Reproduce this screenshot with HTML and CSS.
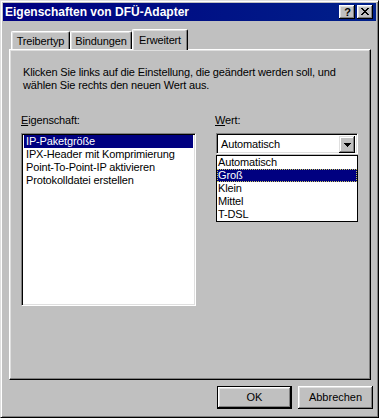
FILE: index.html
```html
<!DOCTYPE html>
<html>

<head>
    <title>Eigenschaften von DFÜ-Adapter</title>
    <link rel="stylesheet" href="styles.css">
</head>

<body>
    <div class="window">
        <div class="titlebar">
            <span class="title">Eigenschaften von DFÜ-Adapter</span>
            <div class="caption-buttons">
                <span class="cap-btn help">?</span>
                <span class="cap-btn close">
                    <svg width="8" height="7" viewBox="0 0 8 7">
                        <path d="M0 0h2v1h1v1h2v-1h1v-1h2v1h-1v1h-1v1h-1v1h1v1h1v1h1v1h-2v-1h-1v-1h-2v1h-1v1h-2v-1h1v-1h1v-1h1v-1h-1v-1h-1v-1h-1z" fill="#000" />
                    </svg>
                </span>
            </div>
        </div>

        <div class="tabs">
            <span class="tab tab-1">Treibertyp</span>
            <span class="tab tab-2">Bindungen</span>
            <span class="tab tab-3 active">Erweitert</span>
        </div>

        <div class="panel">
            <p class="intro">Klicken Sie links auf die Einstellung, die geändert werden soll, und
                wählen Sie rechts den neuen Wert aus.</p>
            <div class="fields">
                <div class="field field-left">
                    <label class="caption"><u>E</u>igenschaft:</label>
                    <ul class="listbox">
                        <li class="selected">IP-Paketgröße</li>
                        <li>IPX-Header mit Komprimierung</li>
                        <li>Point-To-Point-IP aktivieren</li>
                        <li>Protokolldatei erstellen</li>
                    </ul>
                </div>
                <div class="field field-right">
                    <label class="caption"><u>W</u>ert:</label>
                    <div class="combo">
                        <span class="combo-value">Automatisch</span>
                        <span class="combo-arrow">
                            <svg width="7" height="4" viewBox="0 0 7 4">
                                <path d="M0 0h7v1h-1v1h-1v1h-1v1h-1v-1h-1v-1h-1v-1h-1z" fill="#000" />
                            </svg>
                        </span>
                    </div>
                    <ul class="dropdown">
                        <li>Automatisch</li>
                        <li class="selected focus">Groß</li>
                        <li>Klein</li>
                        <li>Mittel</li>
                        <li>T-DSL</li>
                    </ul>
                </div>
            </div>
        </div>

        <div class="actions">
            <button type="button" class="btn default">OK</button>
            <button type="button" class="btn">Abbrechen</button>
        </div>
    </div>
</body>

</html>
```

FILE: styles.css
```css
body {
    margin: 0;
    background: #c0c0c0;
    font-family: "Liberation Sans", Arial, sans-serif;
    font-size: 11px;
    line-height: 13px;
    letter-spacing: -0.15px;
    color: #000;
}

.window {
    box-sizing: border-box;
    width: 379px;
    height: 418px;
    padding: 2px;
    background: #c0c0c0;
    border: 1px solid;
    border-color: #dfdfdf #000 #000 #dfdfdf;
    box-shadow: inset 1px 1px #fff, inset -1px -1px #808080;
}

/* title bar */
.titlebar {
    display: flex;
    align-items: center;
    justify-content: space-between;
    height: 18px;
    padding: 0 3px 0 2px;
    background: linear-gradient(to right, #000080, #00208a);
}

.title {
    color: #fff;
    font-weight: bold;
    font-size: 12px;
    letter-spacing: 0;
}

.caption-buttons {
    display: flex;
    gap: 2px;
}

.cap-btn {
    box-sizing: border-box;
    display: flex;
    align-items: center;
    justify-content: center;
    width: 16px;
    height: 14px;
    background: #c0c0c0;
    box-shadow: inset -1px -1px #000, inset 1px 1px #fff, inset -2px -2px #808080, inset 2px 2px #dfdfdf;
}

.help {
    font-weight: bold;
    font-size: 11px;
    line-height: 14px;
    padding-left: 1px;
}

.close svg {
    margin-top: -1px;
}

/* tabs */
.tabs {
    display: flex;
    align-items: flex-end;
    height: 20px;
    margin: 8px 0 0 8px;
    position: relative;
    z-index: 1;
}

.tab {
    box-sizing: border-box;
    height: 18px;
    padding-top: 3px;
    text-align: center;
    background: #c0c0c0;
    border-top: 1px solid #fff;
    border-left: 1px solid #fff;
    border-right: 1px solid #000;
    border-radius: 2px 2px 0 0;
    box-shadow: inset -1px 0 #808080, inset 1px 1px #dfdfdf;
}

.tab-1 {
    width: 59px;
}

.tab-2 {
    width: 62px;
}

.tab-3 {
    width: 51px;
}

.tab.active {
    height: 21px;
    margin: 0 -2px -1px 0;
    padding-top: 4px;
    width: 56px;
}

/* property page */
.panel {
    box-sizing: border-box;
    width: 362px;
    height: 331px;
    margin-left: 6px;
    padding: 16px 0 0 11px;
    border: 1px solid;
    border-color: #fff #000 #000 #fff;
    box-shadow: inset -1px -1px #808080, inset 1px 1px #dfdfdf;
}

.intro {
    margin: 0 0 0 2px;
}

.fields {
    display: flex;
    margin-top: 22px;
}

.field {
    display: flex;
    flex-direction: column;
}

.field-left {
    width: 175px;
}

.field-right {
    width: 142px;
    margin-left: 20px;
}

.caption {
    display: block;
    margin-bottom: 6px;
}

.field-right .caption {
    margin-left: -1px;
}

ul {
    list-style: none;
    margin: 0;
    padding: 0;
}

.listbox {
    box-sizing: border-box;
    height: 173px;
    padding: 1px 2px 0;
    background: #fff;
    border: 1px solid;
    border-color: #808080 #fff #fff #808080;
    box-shadow: inset 1px 1px #000, inset -1px -1px #dfdfdf;
}

.listbox li {
    height: 13px;
    padding-left: 2px;
    white-space: nowrap;
}

.selected {
    background: #000080;
    color: #fff;
}

/* combo box */
.combo {
    box-sizing: border-box;
    display: flex;
    justify-content: space-between;
    height: 21px;
    padding: 2px;
    background: #fff;
    border: 1px solid;
    border-color: #808080 #fff #fff #808080;
    box-shadow: inset 1px 1px #000, inset -1px -1px #dfdfdf;
}

.combo-value {
    padding: 2px 0 0 2px;
}

.combo-arrow {
    box-sizing: border-box;
    display: flex;
    align-items: center;
    justify-content: center;
    width: 16px;
    height: 17px;
    padding-left: 1px;
    background: #c0c0c0;
    box-shadow: inset -1px -1px #000, inset 1px 1px #dfdfdf, inset -2px -2px #808080, inset 2px 2px #fff;
}

.dropdown {
    box-sizing: border-box;
    height: 67px;
    margin-top: 1px;
    background: #fff;
    border: 1px solid #000;
}

.dropdown li {
    box-sizing: border-box;
    height: 13px;
    padding-left: 1px;
}

.dropdown .focus {
    outline: 1px dotted #c8c860;
    outline-offset: -1px;
}

/* dialog buttons */
.actions {
    display: flex;
    justify-content: flex-end;
    gap: 6px;
    margin-top: 6px;
    padding-right: 3px;
}

.btn {
    box-sizing: border-box;
    width: 75px;
    height: 23px;
    padding: 0;
    font: inherit;
    background: #c0c0c0;
    border: none;
    box-shadow: inset -1px -1px #000, inset 1px 1px #fff, inset -2px -2px #808080, inset 2px 2px #dfdfdf;
}

.btn.default {
    border: 1px solid #000;
}
```
